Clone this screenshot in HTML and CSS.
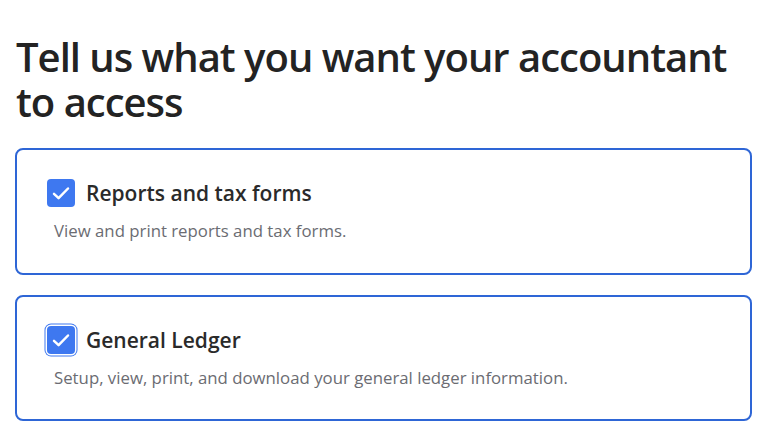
FILE: index.html
```html
<!DOCTYPE html>
<html lang="en">
<head>
<meta charset="utf-8">
<title>Accountant access</title>
<link rel="stylesheet" href="styles.css">
</head>
<body>
<main class="page">
  <h1 class="heading">Tell us what you want your accountant to access</h1>
  <div class="options">
    <label class="card">
      <div class="card-head">
        <span class="check">
          <svg viewBox="0 0 28 28" width="28" height="28" aria-hidden="true"><path d="M7 14.8l4.6 4.3 9.4-9.6" fill="none" stroke="#fff" stroke-width="2.5" stroke-linecap="round" stroke-linejoin="round"/></svg>
        </span>
        <span class="card-title">Reports and tax forms</span>
      </div>
      <p class="card-desc">View and print reports and tax forms.</p>
    </label>
    <label class="card">
      <div class="card-head">
        <span class="check check-focus">
          <svg viewBox="0 0 28 28" width="28" height="28" aria-hidden="true"><path d="M7 14.8l4.6 4.3 9.4-9.6" fill="none" stroke="#fff" stroke-width="2.5" stroke-linecap="round" stroke-linejoin="round"/></svg>
        </span>
        <span class="card-title">General Ledger</span>
      </div>
      <p class="card-desc">Setup, view, print, and download your general ledger information.</p>
    </label>
  </div>
</main>
</body>
</html>
```
FILE: styles.css
```css
* { box-sizing: border-box; }
html, body { margin: 0; background: #fff; }
body { font-family: "Open Sans", "Lato", sans-serif; color: #232323; }
.page { padding: 34px 28px 0 15px; }
.heading {
  margin: 0 0 24px 1px;
  font-size: 40px;
  line-height: 45px;
  font-weight: 600;
  color: #232323;
  letter-spacing: -1px;
}
.options { display: flex; flex-direction: column; gap: 20px; }
.card {
  display: block;
  border: 2px solid #2e66d6;
  border-radius: 8px;
  padding: 29px 30px 29px 30px;
  height: 127px;
}
.card + .card { height: 126px; }
.card-head { display: flex; align-items: center; gap: 11px; }
.check {
  width: 28px; height: 28px;
  border-radius: 4px;
  background: #3e78f0;
  display: flex; align-items: center; justify-content: center;
  flex: none;
}
.check-focus { box-shadow: 0 0 0 1.5px #fff, 0 0 0 2.5px #3e78f0; }
.card-title { font-size: 21px; font-weight: 600; color: #2a2a2a; }
.card-desc {
  margin: 12px 0 0 7px;
  font-size: 16.8px;
  line-height: 24px;
  color: #6b6c72;
}
```
